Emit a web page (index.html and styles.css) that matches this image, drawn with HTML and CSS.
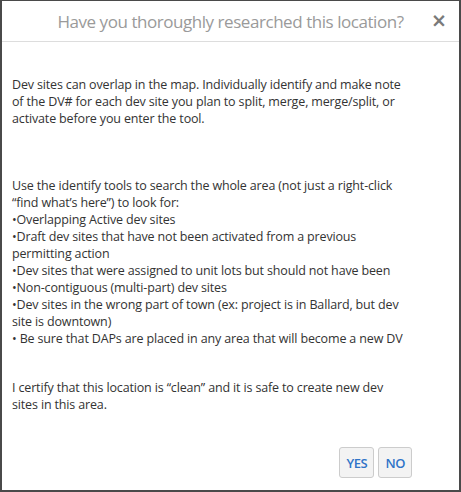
FILE: index.html
```html
<!DOCTYPE html>
<html>
<head>
<meta charset="utf-8">
<link rel="stylesheet" href="styles.css">
</head>
<body>
<div class="modal">
  <div class="modal-header">
    <h4 class="modal-title">Have you thoroughly researched this location?</h4>
    <button class="close" aria-label="Close">&times;</button>
  </div>
  <div class="modal-body">
    <p class="para para-first">Dev sites can overlap in the map. Individually identify and make note of the DV# for each dev site you plan to split, merge, merge/split, or activate before you enter the tool.</p>
    <p class="para para-list">Use the identify tools to search the whole area (not just a right-click “find what’s here”) to look for:<br>•Overlapping Active dev sites<br>•Draft dev sites that have not been activated from a previous permitting action<br>•Dev sites that were assigned to unit lots but should not have been<br>•Non-contiguous (multi-part) dev sites<br>•Dev sites in the wrong part of town (ex: project is in Ballard, but dev site is downtown)<br>• Be sure that DAPs are placed in any area that will become a new DV</p>
    <p class="para para-cert">I certify that this location is “clean” and it is safe to create new dev sites in this area.</p>
  </div>
  <div class="modal-footer">
    <button class="btn">YES</button>
    <button class="btn">NO</button>
  </div>
</div>
</body>
</html>
```

FILE: styles.css
```css
html, body {
  margin: 0;
  padding: 0;
  background: #ffffff;
}
.modal {
  box-sizing: border-box;
  width: 461px;
  height: 492px;
  border: 2px solid #4a4a4a;
  border-top-width: 1px;
  background: #ffffff;
  display: flex;
  flex-direction: column;
  font-family: "Open Sans", "Segoe UI", sans-serif;
  color: #333333;
}
.modal-header {
  position: relative;
  height: 40px;
  border-bottom: 1px solid #dddddd;
  display: flex;
  align-items: center;
  justify-content: center;
}
.modal-title {
  margin: 0;
  font-weight: 400;
  font-size: 17px;
  color: #9a9a9a;
  letter-spacing: -0.45px;
}
.close {
  position: absolute;
  right: 12px;
  top: 9px;
  border: 0;
  background: none;
  padding: 0;
  font-size: 19px;
  line-height: 20px;
  font-weight: 700;
  color: #7a7a7a;
  font-family: "DejaVu Sans", sans-serif;
}
.modal-body {
  flex: 1;
  padding: 34px 10px 0 10px;
}
.para {
  margin: 0;
  font-size: 12.5px;
  line-height: 17px;
  letter-spacing: -0.15px;
  width: 393px;
}
.para-list {
  margin-top: 50px;
}
.para-cert {
  margin-top: 32px;
}
.modal-footer {
  display: flex;
  justify-content: flex-end;
  gap: 4px;
  padding: 0 47px 12px 0;
}
.btn {
  height: 31px;
  padding: 0 6px;
  border: 1px solid #cccccc;
  border-radius: 3px;
  background: #f3f3f3;
  color: #2f74c8;
  font-family: "Open Sans", sans-serif;
  font-weight: 600;
  font-size: 13px;
  letter-spacing: -0.4px;
}
```
